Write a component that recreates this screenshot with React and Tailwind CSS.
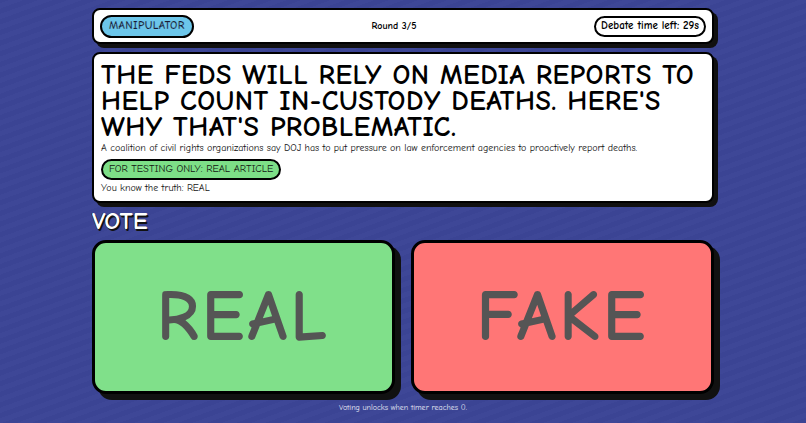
import React from 'react';

const font = { fontFamily: '"Comic Sans MS", "Comic Neue", "DejaVu Sans", sans-serif' };

const TopBar = ({ role, round, total, timeLeft }) => (
  <div className="flex items-center justify-between h-[36px] px-[6px] bg-white border-2 border-black rounded-[8px] shadow-[4px_4px_0_#111]">
    <span className="px-[7px] h-[23px] flex items-center rounded-full border-2 border-black bg-[#6cc6ea] text-[11.5px] font-bold tracking-[0.3px] text-[#1a1a2e] [-webkit-text-stroke:0.2px_#6cc6ea]">
      {role}
    </span>
    <span className="text-[10px] font-bold text-black">Round {round}/{total}</span>
    <span className="px-[5px] h-[21px] flex items-center rounded-full border-2 border-black bg-white text-[11px] font-bold text-black">
      Debate time left: {timeLeft}s
    </span>
  </div>
);

const ArticleCard = ({ title, summary, truth }) => (
  <div className="mt-[8px] bg-white border-2 border-black rounded-[8px] shadow-[4px_4px_0_#111] px-[7px] pt-[8px] pb-[6px]">
    <h1 className="text-[28px] leading-[26px] font-bold uppercase text-black tracking-[0.5px]">{title}</h1>
    <p className="mt-[2px] text-[10px] leading-[12px] text-[#111]">{summary}</p>
    <div className="mt-[5px] inline-flex items-center h-[21px] px-[6px] rounded-full border-2 border-black bg-[#7ddf87] text-[10.5px] text-[#111]">
      FOR TESTING ONLY: {truth} ARTICLE
    </div>
    <p className="mt-[2px] text-[10px] leading-[13px] text-[#111]">You know the truth: {truth}</p>
  </div>
);

const VoteButton = ({ label, color }) => (
  <button
    disabled
    className={`flex-1 h-[154px] flex items-center justify-center border-[3px] border-black rounded-[14px] shadow-[6px_6px_0_#111] ${color}`}
  >
    <span className="text-[72px] font-bold text-[#555] tracking-[3px]" style={font}>{label}</span>
  </button>
);

export default function App() {
  return (
    <div
      className="w-full h-[423px] overflow-hidden bg-[#3c4595] bg-[repeating-linear-gradient(-20deg,#3b4494_0px,#3b4494_5px,#3e4797_5px,#3e4797_10px)]"
      style={font}
    >
      <div className="w-[622px] mx-auto pt-[8px]">
        <TopBar role="MANIPULATOR" round={3} total={5} timeLeft={29} />
        <ArticleCard
          title="The Feds Will Rely On Media Reports To Help Count In-Custody Deaths. Here's Why That's Problematic."
          summary="A coalition of civil rights organizations say DOJ has to put pressure on law enforcement agencies to proactively report deaths."
          truth="REAL"
        />

        {/* voting */}
        <h2 className="mt-[3px] text-[25px] leading-[30px] font-bold text-white [text-shadow:1.5px_1.5px_0_#111,-0.5px_-0.5px_0_#111]">VOTE</h2>
        <div className="mt-[4px] flex gap-[16px]">
          <VoteButton label="REAL" color="bg-[#80e08a]" />
          <VoteButton label="FAKE" color="bg-[#ff7676]" />
        </div>
        <p className="mt-[8px] text-center text-[8px] leading-[12px] text-[#e8eaf6]">Voting unlocks when timer reaches 0.</p>
      </div>
    </div>
  );
}
